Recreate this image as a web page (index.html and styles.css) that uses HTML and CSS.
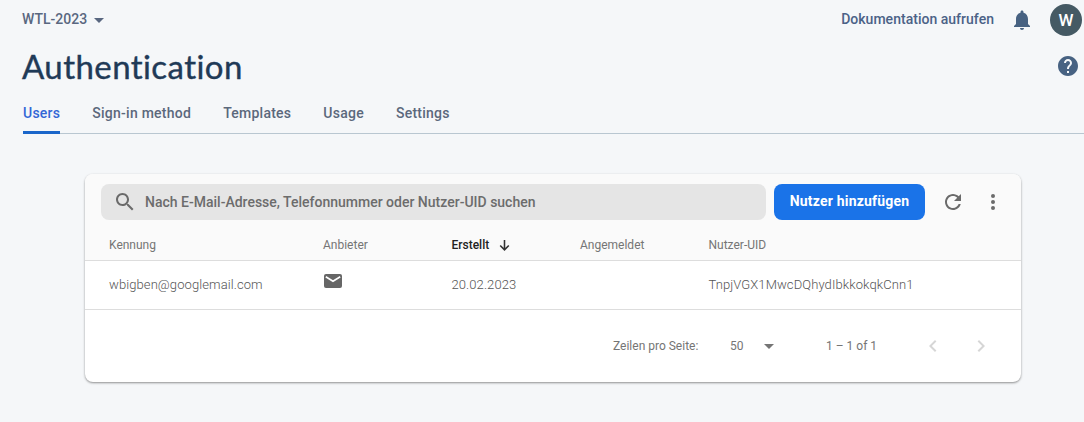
FILE: index.html
```
<!DOCTYPE html>
<html lang="de">
<head>
<meta charset="utf-8">
<title>Authentication</title>
<link rel="stylesheet" href="styles.css">
</head>
<body>
<header class="topbar">
  <div class="project"><span>WTL-2023</span><svg class="caret" viewBox="0 0 10 5"><path d="M0 0h10L5 5z"/></svg></div>
  <div class="top-actions">
    <a class="docs">Dokumentation aufrufen</a>
    <svg class="bell" viewBox="0 0 24 24"><path d="M12 22c1.1 0 2-.9 2-2h-4c0 1.100.89 2 2 2zm6-6v-5c0-3.070-1.640-5.640-4.500-6.320V4c0-.83-.67-1.500-1.500-1.500s-1.500.67-1.500 1.500v.68C7.630 5.360 6 7.920 6 11v5l-2 2v1h16v-1l-2-2z"/></svg>
    <div class="avatar">W</div>
  </div>
</header>
<div class="heading">
  <h1>Authentication</h1>
  <svg class="help" viewBox="0 0 24 24"><path d="M12 2C6.480 2 2 6.480 2 12s4.480 10 10 10 10-4.480 10-10S17.520 2 12 2zm1 17h-2v-2h2v2zm2.070-7.750l-.9.920C13.450 12.900 13 13.500 13 15h-2v-.5c0-1.100.45-2.100 1.170-2.830l1.240-1.260c.37-.36.590-.86.590-1.410 0-1.100-.9-2-2-2s-2 .9-2 2H8c0-2.210 1.790-4 4-4s4 1.790 4 4c0 .88-.36 1.680-.93 2.250z"/></svg>
</div>
<nav class="tabs">
  <a class="tab active">Users</a><a class="tab">Sign-in method</a><a class="tab">Templates</a><a class="tab">Usage</a><a class="tab">Settings</a>
</nav>
<main class="card">
  <div class="toolbar">
    <div class="search">
      <svg class="icon" viewBox="0 0 24 24"><path d="M15.500 14h-.79l-.28-.27C15.410 12.590 16 11.110 16 9.500 16 5.910 13.090 3 9.500 3S3 5.910 3 9.500 5.910 16 9.500 16c1.610 0 3.090-.59 4.230-1.570l.27.280v.79l5 4.990L20.490 19l-4.990-5zm-6 0C7.010 14 5 11.990 5 9.500S7.010 5 9.500 5 14 7.010 14 9.500 11.990 14 9.500 14z"/></svg>
      <span>Nach E-Mail-Adresse, Telefonnummer oder Nutzer-UID suchen</span>
    </div>
    <button class="add">Nutzer hinzufügen</button>
    <svg class="icon refresh" viewBox="0 0 24 24"><path d="M17.650 6.350C16.200 4.900 14.210 4 12 4c-4.420 0-7.990 3.580-7.990 8s3.570 8 7.990 8c3.730 0 6.840-2.550 7.730-6h-2.080c-.82 2.330-3.040 4-5.650 4-3.310 0-6-2.690-6-6s2.690-6 6-6c1.660 0 3.140.69 4.220 1.780L13 11h7V4l-2.350 2.350z"/></svg>
    <svg class="icon more" viewBox="0 0 24 24"><circle cx="12" cy="6" r="2"/><circle cx="12" cy="12" r="2"/><circle cx="12" cy="18" r="2"/></svg>
  </div>
  <div class="row head">
    <span>Kennung</span><span>Anbieter</span>
    <span class="sorted">Erstellt<svg class="sort" viewBox="0 0 12 12"><path d="M6 0v10.500M1.300 6L6 10.700 10.700 6"/></svg></span>
    <span>Angemeldet</span><span>Nutzer-UID</span>
  </div>
  <div class="row entry">
    <span>wbigben@googlemail.com</span>
    <svg class="mail" viewBox="0 0 18 14"><path d="M2 0h14a2 2 0 0 1 2 2v10a2 2 0 0 1-2 2H2a2 2 0 0 1-2-2V2a2 2 0 0 1 2-2z"/><path class="flap" d="M1.800 2.800L9 7.300l7.200-4.500"/></svg>
    <span>20.02.2023</span><span></span><span class="uid">TnpjVGX1MwcDQhydIbkkokqkCnn1</span>
  </div>
  <footer class="pager">
    <span class="per-page">Zeilen pro Seite:</span><span class="size">50</span><svg class="caret" viewBox="0 0 10 5"><path d="M0 0h10L5 5z"/></svg>
    <span class="range">1 – 1 of 1</span>
    <svg class="chev" viewBox="0 0 24 24"><path d="M15.410 7.410L14 6l-6 6 6 6 1.410-1.410L10.830 12z"/></svg>
    <svg class="chev" viewBox="0 0 24 24"><path d="M10 6L8.590 7.410 13.170 12l-4.580 4.590L10 18l6-6z"/></svg>
  </footer>
</main>
</body>
</html>
```
FILE: styles.css
```
* { box-sizing: border-box; }
body { margin: 0; height: 422px; overflow: hidden; background: #f5f7f9; font: 14px/20px Roboto, sans-serif; color: #757575; }
svg { display: block; flex: none; fill: currentColor; }
.topbar { display: flex; justify-content: space-between; align-items: center; height: 40px; padding: 0 2px 0 22px; color: #596780; font-weight: 500; }
.project, .top-actions { display: flex; align-items: center; }
.project { gap: 7px; }
.project span, .docs { padding-bottom: 2px; }
.caret { width: 10px; height: 5px; }
.docs { color: #4b6287; letter-spacing: .02px; }
.bell { width: 24px; height: 24px; margin: 0 16px; color: #476282; }
.avatar { width: 32px; height: 32px; border-radius: 50%; background: #455a64; color: #fff; font: 500 17px/33px Roboto, sans-serif; text-align: center; }
.heading { display: flex; justify-content: space-between; height: 53px; padding: 6px 4px 0 22px; }
h1 { margin: 0; font: 400 33px/40px Lato, sans-serif; color: #1f3a57; letter-spacing: .43px; -webkit-text-stroke: .4px #1f3a57; }
.help { width: 24px; height: 24px; margin-top: 8px; color: #476282; }
.tabs { display: flex; gap: 32px; height: 41px; margin-left: 23px; border-bottom: 1px solid #b9c7d1; }
.tab { height: 41px; padding-top: 10px; font-weight: 500; letter-spacing: .25px; color: #5b687c; }
.active { color: #3367d6; background: linear-gradient(#1a66ca, #1a66ca) bottom / 100% 3px no-repeat; border-radius: 2px 2px 0 0; }
.card { width: 936px; height: 208px; margin: 40px 0 0 85px; border-radius: 8px; overflow: hidden; background: #fff; box-shadow: 0 1px 2px rgba(0,0,0,.3), 0 1px 3px rgba(0,0,0,.15); }
.toolbar { display: flex; align-items: center; height: 56px; padding: 0 16px; background: #fafafa; }
.search { display: flex; align-items: center; gap: 8px; width: 665px; height: 36px; padding-left: 12px; border-radius: 8px; background: #e5e5e5; color: #6c6c6c; font-weight: 500; letter-spacing: 0; }
.icon { width: 24px; height: 24px; color: #6b6b6b; }
.add { width: 151px; height: 36px; margin-left: 8px; padding: 0 0 2px; border: 0; border-radius: 8px; background: #1a73e8; color: #fff; font: 700 14px/20px Roboto, sans-serif; letter-spacing: .2px; }
.refresh { margin-left: 16px; }
.more { margin-left: 16px; }
.row { display: grid; grid-template-columns: 214px 128.500px 128.500px 128.500px 1fr; padding-left: 24px; border-bottom: 1px solid #ddd; }
.head { height: 31px; padding-top: 5px; background: #fafafa; font-size: 12px; }
.sorted { display: flex; align-items: center; gap: 10px; height: 20px; color: #222; font-weight: 500; }
.sort { width: 11px; height: 11px; margin-top: 1px; fill: none; stroke: #333; stroke-width: 1.700; }
.entry { height: 49px; padding-top: 14px; font-size: 13px; font-weight: 300; letter-spacing: .09px; color: #555; }
.mail { width: 18px; height: 14px; margin: -1px 0 0 1px; color: #666; }
.flap { fill: none; stroke: #fff; stroke-width: 1.700; }
.pager { display: flex; align-items: center; height: 72px; padding-left: 528px; font-size: 12px; color: #757575; }
.per-page { width: 117px; }
.size { width: 34px; }
.range { width: 95px; margin-left: 52px; }
.chev { width: 24px; height: 24px; margin-right: 24px; color: #d6d6d6; }
```
